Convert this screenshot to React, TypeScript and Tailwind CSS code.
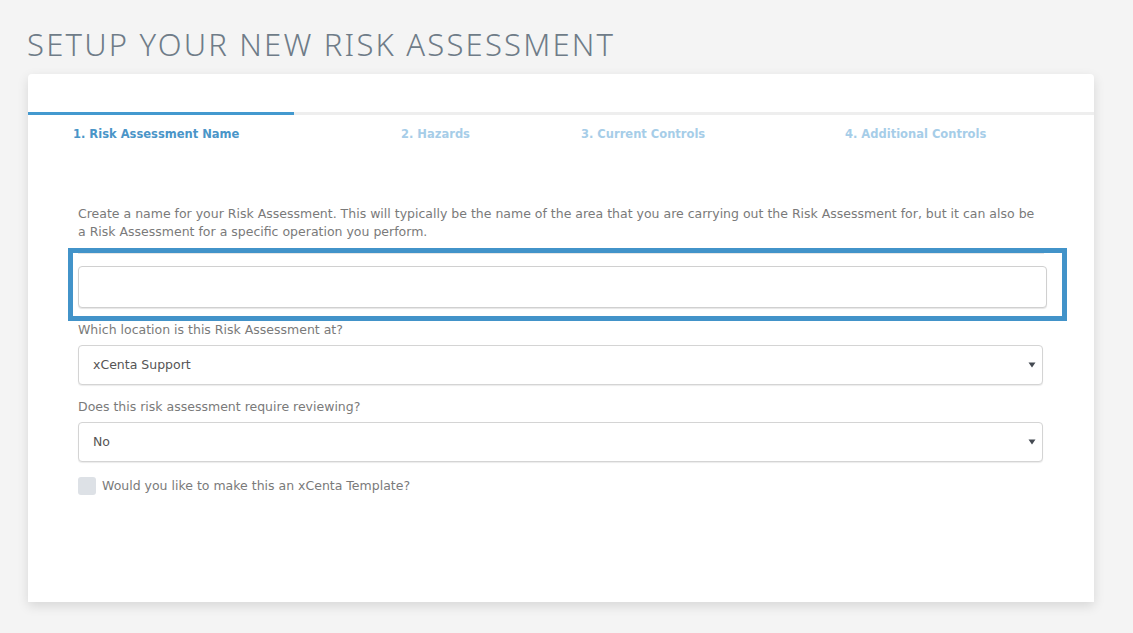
import React from "react";

const font = { fontFamily: '"DejaVu Sans", "Noto Sans", sans-serif' };

function Caret() {
  return (
    <svg width="8" height="6" viewBox="0 0 8 6" className="absolute right-[6px] top-1/2 -translate-y-1/2">
      <path d="M0.5 0.5 L7.5 0.5 L4 5.5 Z" fill="#444a52" />
    </svg>
  );
}

function SelectBox({ value }: { value: string }) {
  return (
    <div className="relative flex h-[40px] w-[965px] items-center rounded-[4px] border border-[#d4d4d4] bg-white pl-[14px] text-[12.5px] text-[#555] shadow-[0_1px_1px_rgba(0,0,0,0.08)]">
      {value}
      <Caret />
    </div>
  );
}

export default function App() {
  const tabs = [
    { label: "1. Risk Assessment Name", w: "w-[328px]", active: true },
    { label: "2. Hazards", w: "w-[180px]", active: false },
    { label: "3. Current Controls", w: "w-[264px]", active: false },
    { label: "4. Additional Controls", w: "w-[200px]", active: false },
  ];

  return (
    <div className="min-h-[633px] w-full bg-[#f4f4f4] pt-[26px]" style={font}>
      <h1
        className="ml-[27px] text-[31px] font-light uppercase leading-[36px] tracking-[2.2px] text-[#6f7c88]"
        style={{ fontFamily: '"Noto Sans", "DejaVu Sans", sans-serif' }}
      >
        Setup your new risk assessment
      </h1>
      <div className="ml-[28px] mt-[12px] w-[1066px] rounded-t-[4px] bg-white shadow-[0_4px_12px_rgba(0,0,0,0.12)]">
        <div className="h-[38px]" />
        <div className="flex h-[3px] w-full bg-[#eeeeee]">
          <div className="h-full w-[266px] bg-[#4399cf]" />
        </div>
        <div className="flex h-[38px] items-center pl-[45px] pt-[2px] text-[11.5px] font-bold">
          {tabs.map((t) => (
            <div
              key={t.label}
              className={`${t.w} whitespace-nowrap ${t.active ? "text-[#4a95c8]" : "text-[#a6cde8]"}`}
            >
              {t.label}
            </div>
          ))}
        </div>
        <div className="h-[449px] pl-[50px] pr-[40px] pt-[52px]">
          <p className="whitespace-nowrap text-[12.5px] leading-[18px] text-[#7a7a7a]">
            Create a name for your Risk Assessment. This will typically be the name of the area that you are carrying out the Risk Assessment for, but it can also be
            <br />
            a Risk Assessment for a specific operation you perform.
          </p>
          <div className="mt-[7px] w-[999px] -translate-x-[10px] border-[5px] border-[#4293c9] px-[5px]">
            <div className="w-[966px] border-t border-[#e6e6e6] pb-[8px] pt-[12px]">
              <div className="h-[42px] w-[969px] rounded-[4px] border border-[#d0d0d0] bg-white shadow-[0_1px_1px_rgba(0,0,0,0.1)]" />
            </div>
          </div>
          <div className="mt-[1px] text-[12.5px] leading-[16px] text-[#7a7a7a]">Which location is this Risk Assessment at?</div>
          <div className="mt-[7px]">
            <SelectBox value="xCenta Support" />
          </div>
          <div className="mt-[14px] text-[12.5px] leading-[16px] text-[#7a7a7a]">Does this risk assessment require reviewing?</div>
          <div className="mt-[7px]">
            <SelectBox value="No" />
          </div>
          <label className="mt-[15px] flex items-center gap-[6px] text-[12.5px] text-[#7a7a7a]">
            <span className="h-[18px] w-[18px] rounded-[3px] bg-[#dde1e6]" />
            Would you like to make this an xCenta Template?
          </label>
        </div>
      </div>
    </div>
  );
}
